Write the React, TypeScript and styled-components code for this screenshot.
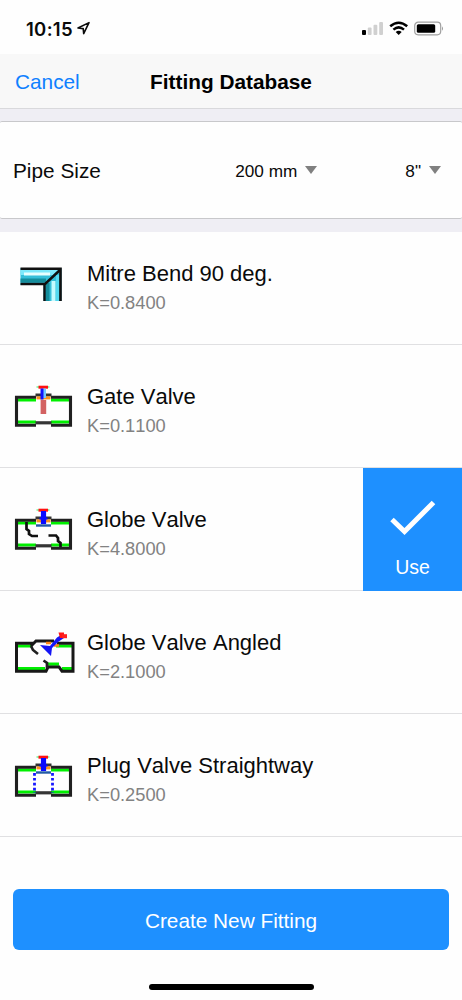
import React from "react";
import styled, { createGlobalStyle } from "styled-components";

const GlobalStyle = createGlobalStyle`
  * {
    box-sizing: border-box;
  }
  body {
    margin: 0;
    background: #fefefe;
    font-family: "Liberation Sans", Helvetica, Arial, sans-serif;
    font-kerning: none;
    color: #0a0a0a;
  }
  button {
    font-family: inherit;
    font-kerning: none;
    border: none;
    padding: 0;
    cursor: pointer;
  }
`;

const Screen = styled.div`
  width: 462px;
  height: 1000px;
  display: flex;
  flex-direction: column;
  overflow: hidden;
  background: #fefefe;
`;

const StatusBar = styled.div`
  flex: none;
  height: 54px;
  padding: 4px 18px 0 26px;
  display: flex;
  align-items: center;
`;

const Time = styled.span`
  width: 49px;
  font-family: Inter, sans-serif;
  font-size: 18.5px;
  font-weight: 600;
  letter-spacing: 0.3px;
  white-space: nowrap;
`;

const StatusIcons = styled.div`
  margin-left: auto;
  display: flex;
`;

const NavBar = styled.header`
  flex: none;
  height: 55px;
  padding: 2px 15px 0;
  display: grid;
  grid-template-columns: 1fr auto 1fr;
  align-items: center;
  background: #f8f8f8;
  border-bottom: 1px solid #d9d9dc;
`;

const CancelButton = styled.button`
  justify-self: start;
  background: none;
  color: #0f80ff;
  font-size: 20.8px;
  line-height: 24px;
`;

const Title = styled.h1`
  margin: 0;
  font-size: 20.8px;
  line-height: 24px;
  font-weight: bold;
  color: #000;
`;

const SizeSection = styled.section`
  flex: none;
  height: 123px;
  padding: 12px 0 13px;
  background: #efeef4;
`;

const SizeCard = styled.div`
  height: 98px;
  padding: 2px 21px 0 13px;
  display: flex;
  align-items: center;
  background: #fefefe;
  border-top: 1px solid #c8c8cb;
  border-bottom: 1px solid #c8c8cb;
  border-radius: 2px;
`;

const SizeLabel = styled.span`
  flex: 1;
  font-size: 20.8px;
`;

const Select = styled.button<{ $gap?: number }>`
  margin-left: ${(props) => props.$gap || 0}px;
  display: flex;
  align-items: center;
  gap: 8px;
  background: none;
  color: #0a0a0a;
  font-size: 17.2px;

  &::after {
    content: "";
    margin-bottom: 2px;
    border: 6px solid transparent;
    border-top: 8px solid #808080;
    border-bottom: none;
  }
`;

const List = styled.ul`
  flex: none;
  height: 605px;
  margin: 0;
  padding: 0;
  list-style: none;
  display: flex;
  flex-direction: column;
  justify-content: flex-end;
  overflow: hidden;
`;

const Row = styled.li`
  flex: none;
  height: 123px;
  display: flex;
  border-bottom: 1px solid #e0e0e2;
`;

const FittingIcon = styled.svg`
  flex: none;
  width: 75px;
  height: 70px;
  margin: 30px 0 0 12px;
`;

const RowText = styled.div`
  flex: 1;
  padding-top: 39px;
`;

const Name = styled.div`
  font-size: 22px;
  line-height: 26px;
  white-space: nowrap;
`;

const Factor = styled.div`
  margin-top: 5px;
  font-size: 18.3px;
  line-height: 22px;
  color: #828282;
`;

const UseButton = styled.button`
  width: 99px;
  height: 123px;
  padding-top: 31px;
  display: flex;
  flex-direction: column;
  align-items: center;
  gap: 20px;
  background: #1e90ff;
  color: #fff;
  font-size: 19.5px;
  line-height: 24px;
`;

const Footer = styled.footer`
  flex: 1;
  padding: 52px 13px 0;
  display: flex;
  flex-direction: column;
  align-items: center;
`;

const CreateButton = styled.button`
  width: 100%;
  height: 61px;
  padding-top: 2px;
  border-radius: 6px;
  background: #1e90ff;
  color: #fff;
  font-size: 20.8px;
`;

const HomeIndicator = styled.div`
  width: 165px;
  height: 6px;
  margin-top: 34px;
  border-radius: 3px;
  background: #000;
`;

const Soft = () => (
  <filter
    id="soft"
    x="-10%"
    y="-10%"
    width="120%"
    height="120%"
    colorInterpolationFilters="sRGB"
  >
    <feGaussianBlur stdDeviation="0.6" />
  </filter>
);

const Elbow = () => (
  <>
    <path d="M20.5 18H61.5V51H43.5V35H20.5Z" fill="#35bfd9" />
    <path d="M20.5 20H58L53 25H20.5Z" fill="#7de9fb" />
    <path d="M24 24H50" stroke="#e8ffff" strokeWidth="3" />
    <path d="M20.5 30.5H46" stroke="#148d9c" strokeWidth="4" />
    <path d="M47.5 33V51" stroke="#148d9c" strokeWidth="4" />
    <path d="M53.5 31V51" stroke="#c5fbff" strokeWidth="4" />
    <path d="M57.5 25V51" stroke="#52d9f0" strokeWidth="3" />
    <path d="M20.5 18.7H60.5V51" fill="none" stroke="#101010" strokeWidth="2.6" />
    <path d="M20.5 34H44.5V51M45 34L60 20" fill="none" stroke="#101010" strokeWidth="2.4" />
  </>
);

const Body = () => (
  <>
    <path d="M18 25H36M51 25H69M18 47H36M51 47H69" stroke="#00ef00" strokeWidth="3.2" />
    <path
      d="M36 22.3H16.5V50.2H36M51 22.3H70.5V50.2H51"
      fill="none"
      stroke="#202020"
      strokeWidth="3.1"
    />
    <path d="M35.5 47.8H51.5" stroke="#353535" strokeWidth="3.2" />
    <path d="M35.5 20H51.5" stroke="#353535" strokeWidth="3" />
    <path d="M36.5 22.9H50.5" stroke="#ff941b" strokeWidth="3" />
    <path d="M36.5 12H49.5" stroke="#7bf79a" strokeWidth="1.6" />
    <path d="M38.5 12.2H48" stroke="#ff1010" strokeWidth="3" />
  </>
);

const Gate = () => (
  <>
    <Body />
    <path d="M44.5 13.5V23" stroke="#75c9ff" strokeWidth="3" />
    <path d="M42 13.5V24.5" stroke="#1010ff" strokeWidth="3" />
    <path d="M43.4 25V39" stroke="#d36262" strokeWidth="5.6" />
  </>
);

const Stem = () => (
  <>
    <path d="M43.5 13V26" stroke="#0808ff" strokeWidth="5.2" />
    <path d="M39.5 20.5H47.5" stroke="#0808ff" strokeWidth="2" />
    <path d="M36 27.5H51" stroke="#235aa5" strokeWidth="2.4" />
  </>
);

const Globe = () => (
  <>
    <Body />
    <Stem />
    <path
      d="M26.5 24V31L29 33V36L32 38H38M48.5 37.5H56L58 40V43L60.5 45V49"
      fill="none"
      stroke="#101010"
      strokeWidth="2.7"
    />
  </>
);

const Angled = () => (
  <>
    <path d="M18 26H31M56 26H72M18 48.5H45M48 44.2H59M62 48.5H72" stroke="#00ef00" strokeWidth="3.2" />
    <path
      d="M34 23.3H16.5V51.2H46L48 47H59L62 51.2H73V23.3H57M31 26L36 21H54"
      fill="none"
      stroke="#181818"
      strokeWidth="3"
    />
    <path d="M31 26L33 30L38 34M43.5 40.5L47 43V48" fill="none" stroke="#202020" strokeWidth="2.7" />
    <path d="M46 23H51M54 25.5H59" stroke="#ff851b" strokeWidth="2.6" />
    <path d="M40 25L50 26L57 17.5L61 15L64 18L58 22L52 28L51 36Z" fill="#1515f5" />
    <path d="M58.5 12.5H64V18H60Z" fill="#ff1616" />
    <path d="M62 16.2H67" stroke="#ff2020" strokeWidth="4" />
  </>
);

const Plug = () => (
  <>
    <Body />
    <Stem />
    <path
      d="M34.5 28V48M52.5 28V48"
      stroke="#1717ff"
      strokeWidth="2.8"
      strokeDasharray="2.7 2.2"
    />
  </>
);

const fittings = [
  { name: "Mitre Bend 90 deg.", k: "0.8400", icon: <Elbow />, top: 2 },
  { name: "Gate Valve", k: "0.1100", icon: <Gate />, top: 0 },
  { name: "Globe Valve", k: "4.8000", icon: <Globe />, top: 0, active: true },
  { name: "Globe Valve Angled", k: "2.1000", icon: <Angled />, top: 1 },
  { name: "Plug Valve Straightway", k: "0.2500", icon: <Plug />, top: -1 },
];

function App() {
  return (
    <Screen>
      <GlobalStyle />
      <StatusBar>
        <Time>10:15</Time>
        <svg width="16" height="16" viewBox="0 0 16 16">
          <path
            d="M3 7L14 1.6L8.7 12.6L8.2 7.6Z"
            fill="none"
            stroke="#0a0a0a"
            strokeWidth="1.6"
            strokeLinejoin="round"
          />
        </svg>
        <StatusIcons>
          <svg width="82" height="16" viewBox="0 0 82 16">
            <rect x="0" y="9" width="4" height="5" rx="1" />
            <g fill="#d0d0d0">
              <rect x="5.8" y="6.5" width="3.8" height="7.5" rx="1" />
              <rect x="11.5" y="3.8" width="3.8" height="10.2" rx="1" />
              <rect x="17.2" y="1" width="3.8" height="13" rx="1" />
            </g>
            <g fill="none" stroke="#000" strokeWidth="2.5">
              <path d="M28.2 5.3Q36.7 -1.8 45.2 5.3" />
              <path d="M31.4 8.6Q36.7 4.2 42 8.6" />
            </g>
            <path d="M33.7 11Q36.7 8.7 39.7 11L36.7 14Z" />
            <rect
              x="52.7"
              y="1.2"
              width="26"
              height="12.6"
              rx="3.5"
              fill="none"
              stroke="#a0a0a0"
              strokeWidth="1.2"
            />
            <rect x="54.8" y="3.2" width="18.4" height="8.6" rx="1.5" />
            <path d="M80 5.2Q82 7.5 80 9.8Z" fill="#999" />
          </svg>
        </StatusIcons>
      </StatusBar>

      <NavBar>
        <CancelButton>Cancel</CancelButton>
        <Title>Fitting Database</Title>
      </NavBar>

      <SizeSection>
        <SizeCard>
          <SizeLabel>Pipe Size</SizeLabel>
          <Select>200 mm</Select>
          <Select $gap={88}>8"</Select>
        </SizeCard>
      </SizeSection>

      <List>
        {fittings.map((item) => (
          <Row key={item.name}>
            <FittingIcon viewBox={`12 ${item.top} 75 70`}>
              <Soft />
              <g filter="url(#soft)">{item.icon}</g>
            </FittingIcon>
            <RowText>
              <Name>{item.name}</Name>
              <Factor>K={item.k}</Factor>
            </RowText>
            {item.active && (
              <UseButton>
                <svg width="46" height="36" viewBox="0 0 46 36">
                  <path
                    d="M2 20.5L14.5 32.5L43.5 3.5"
                    fill="none"
                    stroke="#fff"
                    strokeWidth="5"
                  />
                </svg>
                Use
              </UseButton>
            )}
          </Row>
        ))}
      </List>

      <Footer>
        <CreateButton>Create New Fitting</CreateButton>
        <HomeIndicator />
      </Footer>
    </Screen>
  );
}

export default App;
